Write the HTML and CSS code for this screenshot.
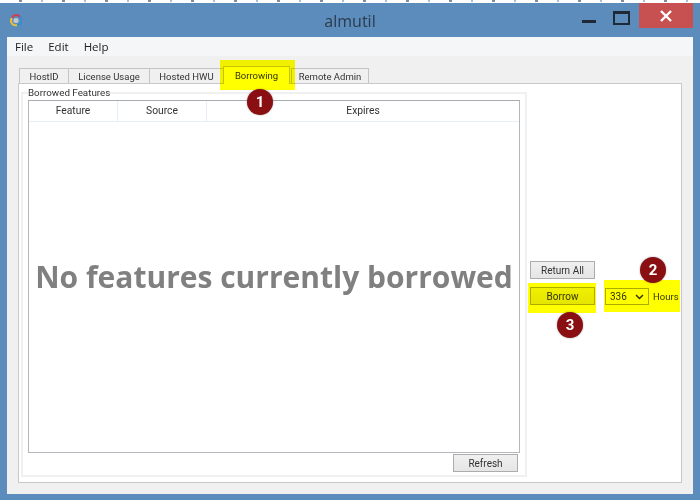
FILE: index.html
```html
<!DOCTYPE html>
<html lang="en">
<head>
  <meta charset="UTF-8" />
  <title>almutil</title>
  <link rel="stylesheet" href="styles.css">
</head>
<body>
  <div class="top-strip"></div>
  <div class="window">
    <div class="title-bar">
      <svg class="app-icon" width="12" height="14" viewBox="0 0 12 14">
        <path d="M2 5 A4.5 4.5 0 0 1 10 4" fill="none" stroke="#c8405a" stroke-width="2"/>
        <path d="M10 4 A4.5 4.5 0 0 1 7 12" fill="none" stroke="#2f8fd0" stroke-width="2"/>
        <path d="M7 12 A4.5 4.5 0 0 1 2 5" fill="none" stroke="#e8c030" stroke-width="2"/>
        <circle cx="6" cy="7.5" r="2.6" fill="#c4c8cc"/>
      </svg>
      <div class="title-text">almutil</div>
      <div class="win-min"></div>
      <div class="win-max"></div>
      <div class="win-close">
        <svg width="14" height="14" viewBox="0 0 14 14">
          <path d="M2 2 L12 12 M12 2 L2 12" stroke="#fff" stroke-width="2.4"/>
        </svg>
      </div>
    </div>

    <div class="client">
      <div class="menu-bar">
        <span>File</span>
        <span>Edit</span>
        <span>Help</span>
      </div>
      <div class="content">
        <div class="tabs">
          <div class="tab tab-hostid">HostID</div>
          <div class="tab tab-license">License Usage</div>
          <div class="tab tab-hosted">Hosted HWU</div>
          <div class="tab tab-active">Borrowing</div>
          <div class="tab tab-remote">Remote Admin</div>
        </div>
        <div class="panel">
          <div class="group">
            <div class="legend">Borrowed Features</div>
            <div class="list">
              <div class="list-head">
                <div>Feature</div>
                <div>Source</div>
                <div>Expires</div>
              </div>
              <div class="list-body">No features currently borrowed</div>
            </div>
            <div class="refresh-row">
              <button class="btn">Refresh</button>
            </div>
          </div>
          <div class="side">
            <button class="btn">Return All</button>
            <div class="borrow-row">
              <button class="btn">Borrow</button>
              <div class="select-wrap">
                <select class="hours-select">
                  <option>336</option>
                </select>
                <svg class="select-arrow" width="9" height="6" viewBox="0 0 9 6">
                  <path d="M1 1 L4.5 4.5 L8 1" fill="none" stroke="#333" stroke-width="1.5"/>
                </svg>
              </div>
              <span class="hours-label">Hours</span>
            </div>
          </div>
        </div>
      </div>
    </div>
  </div>

  <!-- callouts drawn over the screenshot -->
  <div class="mark mark-tab"></div>
  <div class="mark mark-borrow"></div>
  <div class="mark mark-hours"></div>
  <div class="badge badge-1">1</div>
  <div class="badge badge-2">2</div>
  <div class="badge badge-3">3</div>
</body>
</html>
```

FILE: styles.css
```css
body {
  margin: 0;
  width: 700px;
  height: 500px;
  overflow: hidden;
  position: relative;
  background-color: #fff;
  font-family: Roboto, "Noto Sans", sans-serif;
  font-size: 10px;
  color: #333;
}
.top-strip {
  height: 3px;
  background-color: #fff;
  background-image: repeating-linear-gradient(90deg, transparent 0 19px, #7f8f9f 19px 22px, transparent 22px 41px, #a9c0da 41px 43px);
  background-size: 100% 2px;
  background-repeat: no-repeat;
}
.window {
  height: 497px;
  box-sizing: border-box;
  padding: 0 7px 6px;
  background-color: #5b8cbb;
  display: flex;
  flex-direction: column;
}
.title-bar {
  height: 34px;
  flex-shrink: 0;
  display: flex;
  align-items: flex-start;
  position: relative;
}
.app-icon {
  position: absolute;
  left: 3px;
  top: 10px;
}
.title-text {
  position: absolute;
  left: 0;
  right: 0;
  top: 7px;
  text-align: center;
  font-family: "Open Sans", sans-serif;
  font-size: 16px;
  line-height: 22px;
  color: #2b3b4b;
}
.win-min {
  width: 14px;
  height: 3px;
  margin: 17px 0 0 575px;
  background-color: #1f2a36;
}
.win-max {
  width: 13px;
  height: 9px;
  margin: 8px 0 0 17px;
  border: 2px solid #1f2a36;
  border-top-width: 3px;
}
.win-close {
  width: 55px;
  height: 25px;
  margin-left: 9px;
  background-color: #c75050;
  display: flex;
  align-items: center;
  justify-content: center;
}
.client {
  flex: 1;
  display: flex;
  flex-direction: column;
  background-color: #f0f0f0;
}
.menu-bar {
  height: 18px;
  padding: 1px 0 0 8px;
  background-color: #f5f6f8;
  display: flex;
  gap: 15px;
  font-family: "Open Sans", sans-serif;
  font-size: 11.5px;
  line-height: 18px;
  color: #222;
}
.content {
  flex: 1;
  display: flex;
  flex-direction: column;
  padding: 12px 11px 11px;
}
.tabs {
  height: 15px;
  display: flex;
  align-items: flex-end;
  margin-left: 1px;
}
.tab {
  height: 15px;
  box-sizing: border-box;
  border: 1px solid #c4c4c4;
  border-bottom: none;
  margin-right: -1px;
  background-color: #f0f0f0;
  font-size: 9.5px;
  text-align: center;
  line-height: 15px;
}
.tab-hostid { width: 50px; }
.tab-license { width: 82px; }
.tab-hosted { width: 75px; }
.tab-active {
  width: 67px;
  height: 18px;
  margin-bottom: -1px;
  background-color: #fff;
  line-height: 17px;
  position: relative;
}
.tab-remote {
  width: 78px;
  margin-left: 2px;
}
.panel {
  flex: 1;
  display: flex;
  align-items: stretch;
  border: 1px solid #c8c8c8;
  background-color: #fff;
}
.group {
  flex-shrink: 0;
  width: 506px;
  height: 385px;
  box-sizing: border-box;
  margin: 8px 0 0 2px;
  padding: 0 5px 3px;
  border: 2px solid #f0f0f0;
}
.legend {
  width: fit-content;
  height: 14px;
  margin-top: -8px;
  background-color: #fff;
  font-size: 9.8px;
  line-height: 14px;
}
.list {
  height: 353px;
  box-sizing: border-box;
  border: 1px solid #b4b7bb;
  border-top-color: #a8abb0;
  display: flex;
  flex-direction: column;
}
.list-head {
  height: 20px;
  flex-shrink: 0;
  display: grid;
  grid-template-columns: 89px 89px 1fr;
  border-bottom: 1px solid #e6eef7;
  font-size: 10.3px;
  line-height: 20px;
  text-align: center;
}
.list-head div {
  border-right: 1px solid #e6eef7;
}
.list-head div:last-child {
  border-right: none;
}
.list-body {
  flex: 1;
  display: flex;
  align-items: center;
  justify-content: center;
  padding-bottom: 22px;
  font-family: "Open Sans", sans-serif;
  font-size: 30px;
  font-weight: bold;
  color: #808080;
  white-space: nowrap;
}
.refresh-row {
  display: flex;
  justify-content: flex-end;
  margin-top: 1px;
  padding-right: 2px;
}
.btn {
  width: 65px;
  height: 18px;
  padding: 0;
  box-sizing: border-box;
  border: 1px solid #acacac;
  background: linear-gradient(#f0f0f0, #e5e5e5);
  font-family: inherit;
  font-size: 10px;
  color: #333;
}
.side {
  display: flex;
  flex-direction: column;
  justify-content: center;
  gap: 8px;
  margin-left: 3px;
}
.borrow-row {
  display: flex;
  align-items: center;
}
.select-wrap {
  position: relative;
  width: 44px;
  height: 17px;
  margin-left: 10px;
}
.hours-select {
  appearance: none;
  display: block;
  width: 100%;
  height: 100%;
  padding: 0 0 0 4px;
  box-sizing: border-box;
  border: 1px solid #acacac;
  border-radius: 0;
  background-color: #fff;
  font-family: inherit;
  font-size: 10px;
  color: #333;
}
.select-arrow {
  position: absolute;
  right: 5px;
  top: 6px;
}
.hours-label {
  margin-left: 4px;
  font-size: 9.5px;
}

/* callouts */
.mark {
  position: absolute;
  background-color: #ffff00;
  mix-blend-mode: multiply;
}
.mark-tab {
  left: 220px;
  top: 60px;
  width: 75px;
  height: 30px;
}
.mark-borrow {
  left: 528px;
  top: 283px;
  width: 68px;
  height: 30px;
}
.mark-hours {
  left: 604px;
  top: 280px;
  width: 76px;
  height: 32px;
}
.badge {
  position: absolute;
  width: 26px;
  height: 26px;
  border-radius: 50%;
  background-color: #8a0f12;
  box-shadow: 0 0 2px rgba(0,0,0,0.4);
  color: #fff;
  font-size: 15px;
  font-weight: bold;
  line-height: 26px;
  text-align: center;
}
.badge-1 { left: 247px; top: 89px; }
.badge-2 { left: 640px; top: 257px; }
.badge-3 { left: 557px; top: 312px; }
```
